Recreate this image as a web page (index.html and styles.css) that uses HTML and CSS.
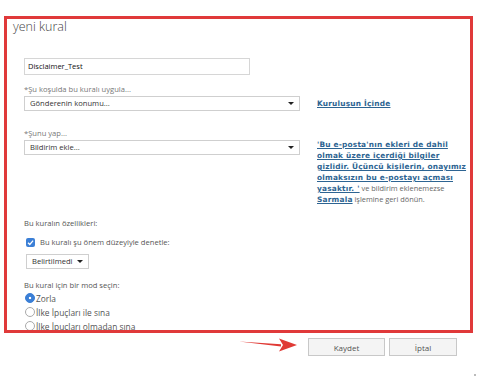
FILE: index.html
```html
<!DOCTYPE html>
<html lang="tr">
<head>
<meta charset="utf-8">
<title>yeni kural</title>
<link rel="stylesheet" href="styles.css">
</head>
<body>
<div class="frame">
  <h1 class="title">yeni kural</h1>
  <div class="form">
    <div class="textbox">Disclaimer_Test</div>
    <div class="row row-cond">
      <div class="col-left">
        <div class="label">*Şu koşulda bu kuralı uygula...</div>
        <div class="select wide"><span>Gönderenin konumu...</span><i class="caret"></i></div>
      </div>
      <div class="col-right">
        <a class="link" href="#">Kuruluşun İçinde</a>
      </div>
    </div>
    <div class="row row-action">
      <div class="col-left">
        <div class="label">*Şunu yap...</div>
        <div class="select wide"><span>Bildirim ekle...</span><i class="caret"></i></div>
      </div>
      <div class="col-right">
        <p class="desc"><a class="link" href="#">'Bu e-posta'nın ekleri de dahil<br>olmak üzere içerdiği bilgiler<br>gizlidir. Üçüncü kişilerin, onayımız<br>olmaksızın bu e-postayı açması<br>yasaktır. '</a> ve bildirim eklenemezse<br><a class="link" href="#">Sarmala</a> işlemine geri dönün.</p>
      </div>
    </div>
    <div class="props">
      <div class="label dark">Bu kuralın özellikleri:</div>
      <div class="check-row"><span class="checkbox"><svg viewBox="0 0 10 10" width="9" height="9"><path d="M2.2 5.2 L4.2 7.2 L7.9 2.9" fill="none" stroke="#fff" stroke-width="1.4"/></svg></span><span class="label dark">Bu kuralı şu önem düzeyiyle denetle:</span></div>
      <div class="select small"><span>Belirtilmedi</span><i class="caret"></i></div>
      <div class="label dark mode-label">Bu kural için bir mod seçin:</div>
      <div class="radio-row"><span class="radio on"></span><span class="rtext">Zorla</span></div>
      <div class="radio-row"><span class="radio"></span><span class="rtext">İlke İpuçları ile sına</span></div>
      <div class="radio-row"><span class="radio"></span><span class="rtext">İlke İpuçları olmadan sına</span></div>
    </div>
  </div>
</div>
<div class="footer">
  <svg class="arrow" width="60" height="18" viewBox="0 0 60 18"><path d="M0 3.6 L42 6.2 L42 8.6 Z" fill="#e03a35"/><path d="M40 0.5 L58 7 L40 13.5 L44 7 Z" fill="#e03a35"/></svg>
  <button class="btn">Kaydet</button>
  <button class="btn">İptal</button>
</div>
<div class="grip"></div>
</body>
</html>
```

FILE: styles.css
```css
html, body {
  margin: 0;
  padding: 0;
  background: #fff;
  width: 478px;
  height: 378px;
  overflow: hidden;
  position: relative;
  font-family: "Open Sans", "Noto Sans", sans-serif;
}
.frame {
  margin: 16px 0 0 4px;
  width: 463px;
  height: 311px;
  border: 3px solid #e0393a;
  overflow: hidden;
}
.title {
  margin: 0;
  padding: 0 0 0 6px;
  font-size: 12.5px;
  line-height: 16px;
  font-weight: 300;
  color: #444;
}
.form {
  padding: 23px 0 0 17px;
}
.textbox {
  width: 221px;
  height: 15px;
  border: 1px solid #d6d6d6;
  padding: 0 0 0 3px;
  font-size: 7.5px;
  line-height: 15px;
  color: #111;
}
.row {
  display: grid;
  grid-template-columns: 276px 1fr;
  column-gap: 17px;
}
.row-cond { margin-top: 9px; }
.row-action { margin-top: 17px; }
.label {
  font-size: 7.6px;
  line-height: 11px;
  color: #777;
}
.label.dark { color: #555; }
.select {
  position: relative;
  height: 13px;
  border: 1px solid #cfcfcf;
  background: #fff;
  font-size: 7.6px;
  line-height: 13px;
  color: #333;
  padding-left: 5px;
}
.select.wide { margin-top: 1px; }
.caret {
  position: absolute;
  right: 5px;
  top: 5px;
  width: 0;
  height: 0;
  border-left: 3px solid transparent;
  border-right: 3px solid transparent;
  border-top: 3px solid #222;
}
.row-cond .col-right {
  display: flex;
  flex-direction: column;
  justify-content: flex-end;
}
.row-cond .col-right .link {
  line-height: 15px;
}
.row-action .col-right { padding-top: 11px; }
.link {
  font-family: "DejaVu Sans", sans-serif;
  font-size: 7.4px;
  font-weight: bold;
  color: #2d6492;
  text-decoration: underline;
  letter-spacing: 0.2px;
}
.desc {
  margin: 0;
  white-space: nowrap;
  font-size: 7.4px;
  line-height: 11px;
  color: #666;
}
.props { padding-top: 13px; }
.check-row {
  display: flex;
  align-items: center;
  gap: 5px;
  margin-top: 8px;
  padding-left: 2px;
}
.checkbox {
  width: 9px;
  height: 9px;
  border-radius: 2px;
  background: #3b7fd6;
  display: flex;
}
.select.small {
  width: 56px;
  margin: 6px 0 0 2px;
}
.mode-label { margin-top: 11px; }
.radio-row {
  display: flex;
  align-items: center;
  height: 14px;
  padding-left: 1px;
}
.radio {
  width: 8px;
  height: 8px;
  border-radius: 50%;
  border: 1px solid #aaa;
  background: #fff;
  box-sizing: content-box;
  margin-right: 1px;
}
.radio.on {
  background: #3b7fd6 radial-gradient(circle, #fff 0 1.3px, transparent 1.6px);
  border-color: #3b7fd6;
}
.rtext {
  font-size: 8.4px;
  color: #555;
}
.footer {
  display: flex;
  align-items: center;
  justify-content: flex-end;
  gap: 4px;
  padding: 5px 21px 0 0;
}
.arrow { margin-right: 5px; }
.btn {
  width: 77px;
  height: 18px;
  border: 1px solid #c8c8c8;
  background: #f4f4f4;
  font-family: "Open Sans", sans-serif;
  font-size: 8px;
  color: #555;
  padding: 0;
}
.btn + .btn { width: 68px; }
.grip {
  position: absolute;
  right: 2px;
  bottom: 2px;
  width: 2px;
  height: 2px;
  background: #bbb;
}
```
